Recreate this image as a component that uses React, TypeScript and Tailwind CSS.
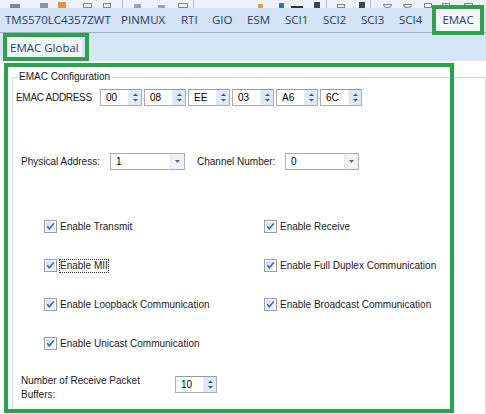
import React from 'react';

const tabs = [
  { label: 'TMS570LC4357ZWT', w: 'w-[116px]' },
  { label: 'PINMUX', w: 'w-[60px]' },
  { label: 'RTI', w: 'w-[31px]' },
  { label: 'GIO', w: 'w-[35px]' },
  { label: 'ESM', w: 'w-[38px]' },
  { label: 'SCI1', w: 'w-[38px]' },
  { label: 'SCI2', w: 'w-[38px]' },
  { label: 'SCI3', w: 'w-[38px]' },
  { label: 'SCI4', w: 'w-[42px]' },
  { label: 'EMAC', w: 'w-[44px]' },
];

const SpinArrows = () => (
  <div className="flex w-[13px] items-center justify-center bg-[#dfe8f4] border-l border-[#e9eef5]">
    <svg width="7" height="11" viewBox="0 0 7 11">
      <path d="M1 4 L3.5 1.5 L6 4 Z" fill="#44546a" />
      <path d="M1 7 L3.5 9.5 L6 7 Z" fill="#44546a" />
    </svg>
  </div>
);

const Spin = ({ value }: { value: string }) => (
  <div className="flex h-[17px] w-[42px] border border-[#abadb3] border-t-[#9a9ca3] bg-white">
    <div className="flex flex-1 items-center pl-[5px] text-[10px] leading-none text-black">{value}</div>
    <SpinArrows />
  </div>
);

const Combo = ({ value, w }: { value: string; w: string }) => (
  <div className={`flex h-[17px] ${w} border border-[#abadb3] bg-white`}>
    <div className="flex flex-1 items-center pl-[5px] text-[10px] leading-none text-black">{value}</div>
    <div className="flex w-[14px] items-center justify-center bg-[#eef2f8] border-l border-[#e3e8ef]">
      <svg width="5" height="3" viewBox="0 0 5 3">
        <path d="M0 0 L5 0 L2.5 3 Z" fill="#5a6473" />
      </svg>
    </div>
  </div>
);

const Check = ({ label, focus }: { label: string; focus?: boolean }) => (
  <div className="flex h-[13px] items-center">
    <svg width="13" height="13" viewBox="0 0 13 13" className="shrink-0">
      <defs>
        <linearGradient id="cbg" x1="0" y1="0" x2="1" y2="1">
          <stop offset="0" stopColor="#cfdcec" />
          <stop offset="1" stopColor="#f4f7fb" />
        </linearGradient>
      </defs>
      <rect x="0.5" y="0.5" width="12" height="12" fill="#fff" stroke="#9a9da3" />
      <rect x="2" y="2" width="9" height="9" fill="url(#cbg)" />
      <path d="M3.2 6.3 L5.4 8.8 L9.8 3.4" fill="none" stroke="#4462a0" strokeWidth="1.5" />
    </svg>
    <span
      className={`ml-[3px] text-[10px] leading-[12px] text-[#1a1a1a] whitespace-nowrap ${
        focus ? 'outline outline-1 outline-dotted outline-[#333]' : ''
      }`}
    >
      {label}
    </span>
  </div>
);

export default function App() {
  return (
    <div className="relative h-[414px] w-[486px] overflow-hidden bg-white font-['Liberation_Sans',Arial,sans-serif]">
      {/* toolbar, cut off at the top */}
      <div className="flex h-[8px] items-end bg-[#eef2f8]">
        <div className="ml-[10px] h-[4px] w-[10px] bg-[#7d8794]" />
        <div className="ml-[20px] h-[5px] w-[8px] bg-[#8a94a1]" />
        <div className="ml-[10px] h-[6px] w-[8px] bg-[#d99a3a]" />
        <div className="ml-[17px] h-[5px] w-[9px] border border-[#7d8794]" />
        <div className="ml-[11px] h-[5px] w-[8px] border border-[#7d8794]" />
        <div className="ml-[11px] h-[8px] w-px bg-[#b6bfcb]" />
        <div className="ml-[11px] h-[4px] w-[7px] bg-[#9aa4b0]" />
        <div className="ml-[17px] h-[3px] w-[7px] bg-[#9aa4b0]" />
        <div className="ml-[13px] h-[5px] w-[10px] border border-[#7d8794]" />
        <div className="ml-[5px] h-[8px] w-px bg-[#b6bfcb]" />
        <div className="ml-[64px] h-[4px] w-[5px] bg-[#c9a646]" />
        <div className="ml-[16px] h-[5px] w-[5px] bg-[#3d6fb4]" />
        <div className="ml-[7px] h-[2px] w-[12px] bg-[#333]" />
        <div className="ml-[11px] h-[6px] w-[6px] bg-[#3d4654]" />
        <div className="ml-[6px] h-[8px] w-px bg-[#b6bfcb]" />
        <div className="ml-[10px] h-[4px] w-[8px] border border-[#7d8794]" />
        <div className="ml-[14px] h-[6px] w-[6px] bg-[#3d4654]" />
        <div className="ml-[5px] h-[8px] w-px bg-[#b6bfcb]" />
        <div className="ml-[12px] h-[4px] w-[9px] rounded-b-full border border-[#7d8794]" />
        <div className="ml-[11px] h-[4px] w-[9px] rounded-b-full border border-[#7d8794]" />
        <div className="ml-[12px] h-[5px] w-[8px] border border-[#7d8794]" />
        <div className="ml-[10px] h-[5px] w-[8px] border border-[#7d8794]" />
        <div className="ml-[14px] h-[5px] w-[9px] border border-[#7d8794]" />
      </div>

      {/* module tabs */}
      <div className="flex h-[25px] items-center border-b border-[#a3adbb] bg-[#d3e2f4] pl-[5px] font-['Open_Sans',sans-serif] text-[11.5px] text-[#2a3f5c]">
        {tabs.map((t) => (
          <span key={t.label} className={`${t.w} shrink-0 whitespace-nowrap`}>
            {t.label}
          </span>
        ))}
      </div>

      {/* sub tabs */}
      <div className="flex h-[28px] items-stretch bg-[#d6e5f7] font-['Open_Sans',sans-serif] text-[11.5px] text-[#2a3f5c]">
        <div className="ml-[7px] mt-[4px] flex h-[22px] items-center bg-[#f1f6fc] px-[3px]">EMAC Global</div>
      </div>

      {/* configuration group */}
      <fieldset className="ml-[12px] mt-[9px] h-[360px] w-[474px] border border-[#d3dbe3]">
        <legend className="ml-[4px] px-[2px] text-[10px] leading-[14px] text-[#1a1a1a]">EMAC Configuration</legend>

        <div className="mt-[5px] flex h-[17px] items-center pl-[3px]">
          <span className="w-[84px] text-[10px] tracking-[-0.3px] text-[#1a1a1a]">EMAC ADDRESS</span>
          <div className="flex gap-[2px]">
            {['00', '08', 'EE', '03', 'A6', '6C'].map((v) => (
              <Spin key={v} value={v} />
            ))}
          </div>
        </div>

        <div className="mt-[47px] flex h-[17px] items-center pl-[8px]">
          <span className="w-[89px] text-[10px] text-[#1a1a1a]">Physical Address:</span>
          <Combo value="1" w="w-[75px]" />
          <span className="ml-[12px] w-[88px] text-[10px] text-[#1a1a1a]">Channel Number:</span>
          <Combo value="0" w="w-[74px]" />
        </div>

        <div className="mt-[50px] grid grid-cols-[220px_1fr] gap-y-[26px] pl-[31px]">
          <Check label="Enable Transmit" />
          <Check label="Enable Receive" />
          <Check label="Enable MII" focus />
          <Check label="Enable Full Duplex Communication" />
          <Check label="Enable Loopback Communication" />
          <Check label="Enable Broadcast Communication" />
          <Check label="Enable Unicast Communication" />
        </div>

        <div className="mt-[24px] flex items-start pl-[8px]">
          <span className="w-[154px] pr-[20px] text-[10px] leading-[14px] text-[#1a1a1a]">
            Number of Receive Packet Buffers:
          </span>
          <div className="mt-[2px]">
            <Spin value="10" />
          </div>
        </div>
      </fieldset>

      {/* highlight boxes */}
      <div className="absolute left-[432px] top-[5px] flex h-[30px] w-[52px] items-center justify-center border-[4px] border-[#2aa34a] bg-[#f3f7fc] font-['Open_Sans',sans-serif] text-[11.5px] text-[#2a3f5c]">
        EMAC
      </div>
      <div className="absolute left-[3px] top-[33px] h-[28px] w-[86px] border-[4px] border-[#2aa34a]" />
      <div className="absolute left-[4px] top-[63px] h-[350px] w-[450px] border-[4px] border-[#2aa34a]" />
    </div>
  );
}
